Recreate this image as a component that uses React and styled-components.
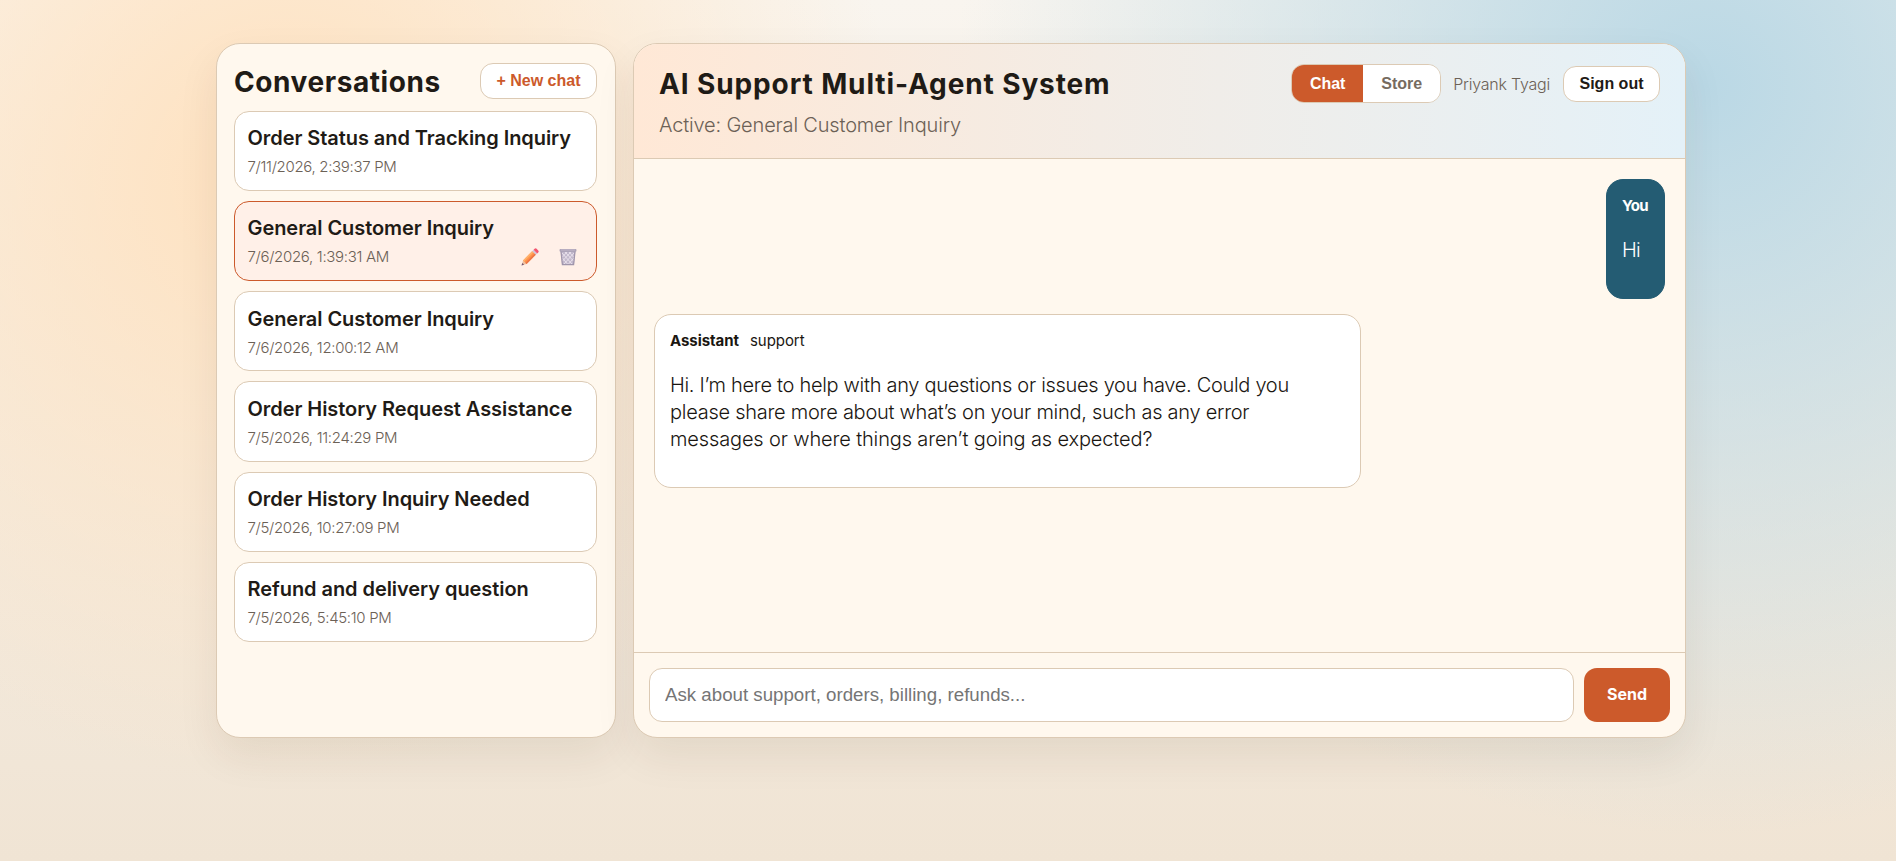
import React, { useState } from "react";
import styled, { createGlobalStyle, css } from "styled-components";

const GlobalStyle = createGlobalStyle`
  * {
    box-sizing: border-box;
  }
  body {
    margin: 0;
    min-height: 100vh;
    color: #1f1b16;
    font-family: Inter, "Noto Sans", sans-serif;
    background:
      radial-gradient(circle at 15% 20%, #ffe1be 0%, transparent 35%),
      radial-gradient(circle at 90% 10%, #bad8e5 0%, transparent 40%),
      linear-gradient(180deg, #f9f5ef 0%, #f0e4d4 100%);
    background-repeat: no-repeat;
  }
  button, input {
    font-family: "Liberation Sans", Arial, sans-serif;
  }
`;

const Shell = styled.div`
  display: grid;
  grid-template-columns: 400px 1fr;
  gap: 17px;
  height: 738px;
  padding: 43px 210px 0 216px;
`;

const panel = css`
  background: #fff8ee;
  border: 1px solid #dccab4;
  border-radius: 24px;
  box-shadow: 0 18px 40px rgba(61, 42, 18, 0.08);
`;

const Sidebar = styled.aside`
  ${panel}
  padding: 19px 18px 17px 17px;
`;

const SidebarHead = styled.div`
  display: flex;
  justify-content: space-between;
  align-items: flex-start;
  margin-bottom: 10px;
`;

const SidebarTitle = styled.h2`
  margin: 0;
  font-size: 28px;
  font-weight: 700;
  line-height: 38px;
  letter-spacing: 0.58px;
`;

const PillButton = styled.button`
  width: ${({ $width }) => $width}px;
  height: 36px;
  padding: 0;
  color: ${({ $accent }) => ($accent ? "#cc5a2b" : "#1f1b16")};
  background: #fff;
  border: 1px solid #dccab4;
  border-radius: 13px;
  font-size: 16px;
  font-weight: 700;
`;

const ConversationList = styled.div`
  display: flex;
  flex-direction: column;
  gap: 10px;
`;

const Conversation = styled.div`
  height: 80.15px;
  padding: 14.3px 13px 11px 12.5px;
  background: ${({ $active }) => ($active ? "#fff0e8" : "#fff")};
  border: 1px solid ${({ $active }) => ($active ? "#cc5a2b" : "#dccab4")};
  border-radius: 15px;
`;

const ConversationTitle = styled.div`
  font-size: 20px;
  font-weight: 600;
  line-height: 24px;
  letter-spacing: -0.06px;
  white-space: nowrap;
`;

const ConversationMeta = styled.div`
  display: flex;
  justify-content: space-between;
  margin-top: 8px;
  padding-right: 6px;
`;

const ConversationDate = styled.span`
  color: #6c6156;
  font-size: 15px;
  font-weight: 300;
  line-height: 18px;
  letter-spacing: -0.32px;
`;

const Actions = styled.span`
  display: flex;
  gap: 20px;
  opacity: 0.78;
`;

const Main = styled.main`
  ${panel}
  display: flex;
  flex-direction: column;
  overflow: hidden;
`;

const Header = styled.header`
  display: flex;
  justify-content: space-between;
  align-items: flex-start;
  height: 115px;
  padding: 20px 25px 0 25px;
  background: linear-gradient(90deg, #ffe8d6, #e4f1f8);
  border-bottom: 1px solid #dccab4;
`;

const Title = styled.h1`
  margin: 2px 0 0;
  font-size: 28px;
  font-weight: 700;
  line-height: 36px;
  letter-spacing: 0.88px;
`;

const Subtitle = styled.p`
  margin: 10px 0 0;
  color: #6c6156;
  font-size: 20px;
  font-weight: 300;
  line-height: 26px;
  letter-spacing: -0.17px;
`;

const Controls = styled.div`
  display: flex;
  align-items: center;
  gap: 12px;
`;

const Segmented = styled.div`
  display: flex;
  width: 150px;
  height: 39px;
  overflow: hidden;
  border: 1px solid #dccab4;
  border-radius: 13px;
`;

const Segment = styled.button`
  flex: ${({ $grow }) => $grow} 0 0;
  padding: 0;
  color: ${({ $active }) => ($active ? "#fff" : "#766b60")};
  background: ${({ $active }) => ($active ? "#cc5a2b" : "#fff")};
  border: 0;
  font-size: 16px;
  font-weight: 700;
`;

const UserName = styled.span`
  margin-right: 1px;
  color: #6c6156;
  font-size: 16px;
  font-weight: 300;
  letter-spacing: -0.22px;
  line-height: 20px;
`;

const Messages = styled.section`
  flex: 1;
  display: flex;
  flex-direction: column;
  align-items: flex-start;
  gap: 15px;
  padding: 20px;
`;

const Bubble = styled.article`
  padding: 16px 15px 34px;
  color: ${({ $mine }) => ($mine ? "#fff" : "#1a1611")};
  background: ${({ $mine }) => ($mine ? "#245c73" : "#fff")};
  border: 1px solid ${({ $mine }) => ($mine ? "#245c73" : "#dccab4")};
  border-radius: 17px;
  width: ${({ $mine }) => ($mine ? "59px" : "707px")};
  align-self: ${({ $mine }) => ($mine ? "flex-end" : "flex-start")};
`;

const BubbleHead = styled.div`
  display: flex;
  gap: 11px;
  margin-bottom: 21px;
  font-size: 15px;
  line-height: 20px;
  letter-spacing: ${({ $mine }) => ($mine ? "-0.6px" : "-0.05px")};
`;

const Line = styled.span`
  display: block;
  font-size: 20px;
  font-weight: 300;
  line-height: 27px;
  letter-spacing: ${({ $tracking }) => $tracking}px;
  white-space: nowrap;
`;

const Composer = styled.form`
  display: flex;
  gap: 10px;
  padding: 15px;
  border-top: 1px solid #dccab4;
`;

const Input = styled.input`
  flex: 1;
  height: 54px;
  padding: 0 15px 1px;
  background: #fff;
  border: 1px solid #dccab4;
  border-radius: 13px;
  font-size: 18.7px;

  &::placeholder {
    color: #757575;
  }
`;

const SendButton = styled.button`
  width: 86px;
  height: 54px;
  padding: 0 0 2px;
  color: #fff;
  background: #cc5a2b;
  border: 0;
  border-radius: 13px;
  font-family: Inter, sans-serif;
  font-size: 16px;
  font-weight: 700;
`;

const PencilIcon = () => (
  <svg width="18" height="18" viewBox="0 0 18 18">
    <path d="M0.8 17.3 2 12.4 5.6 16z" fill="#e8b08a" />
    <path d="M0.5 17.6 1.2 14.9 3.1 16.8z" fill="#4a2a4d" />
    <path d="M2 12.4 11.4 3 15 6.6 5.6 16z" fill="#ff7a1f" />
    <path d="M2 12.4 11.4 3 12.6 4.2 3.2 13.6z" fill="#ffa04a" />
    <path d="M4.4 14.8 13.8 5.4 15 6.6 5.6 16z" fill="#e8541c" />
    <path d="M11.2 3.2 12.6 1.8 16.2 5.4 14.8 6.8z" fill="#c5b7d6" />
    <path d="M12.6 1.8 13.6.8a1.4 1.4 0 0 1 2 0l1.6 1.6a1.4 1.4 0 0 1 0 2l-1 1z" fill="#f0294e" />
  </svg>
);

const TrashIcon = () => (
  <svg width="18" height="18" viewBox="0 0 18 18">
    <path d="M1.6 3h14.8l-1.5 14H3.1z" fill="#b0a8c4" />
    <path
      d="M3 5l10 11M6 4l8.5 9M10 4l5 5.5M3.5 10l5 6M15 5L5 16M12 4l-8.5 9M8 4L3 9.5M14.8 10L9.5 16"
      stroke="#e6e1ef"
      strokeWidth="0.9"
    />
    <path d="M2 3.5 3.4 16.6h11.2L16 3.5" fill="none" stroke="#857c9b" strokeWidth="1.2" />
    <rect x="0.6" y="1" width="16.8" height="2.7" rx="0.8" fill="#8f87a4" />
    <rect x="1.6" y="1.6" width="14.8" height="0.8" fill="#c0b9cf" />
  </svg>
);

const conversations = [
  { id: 1, title: "Order Status and Tracking Inquiry", date: "7/11/2026, 2:39:37 PM" },
  { id: 2, title: "General Customer Inquiry", date: "7/6/2026, 1:39:31 AM" },
  { id: 3, title: "General Customer Inquiry", date: "7/6/2026, 12:00:12 AM" },
  { id: 4, title: "Order History Request Assistance", date: "7/5/2026, 11:24:29 PM" },
  { id: 5, title: "Order History Inquiry Needed", date: "7/5/2026, 10:27:09 PM" },
  { id: 6, title: "Refund and delivery question", date: "7/5/2026, 5:45:10 PM" },
];

const App = () => {
  const [activeId, setActiveId] = useState(2);
  const [draft, setDraft] = useState("");
  const active = conversations.find((item) => item.id === activeId);

  return (
    <>
      <GlobalStyle />
      <Shell>
        <Sidebar>
          <SidebarHead>
            <SidebarTitle>Conversations</SidebarTitle>
            <PillButton $accent $width={117}>
              + New chat
            </PillButton>
          </SidebarHead>
          <ConversationList>
            {conversations.map((item) => (
              <Conversation
                key={item.id}
                $active={item.id === activeId}
                onClick={() => setActiveId(item.id)}
              >
                <ConversationTitle>{item.title}</ConversationTitle>
                <ConversationMeta>
                  <ConversationDate>{item.date}</ConversationDate>
                  {item.id === activeId && (
                    <Actions>
                      <PencilIcon />
                      <TrashIcon />
                    </Actions>
                  )}
                </ConversationMeta>
              </Conversation>
            ))}
          </ConversationList>
        </Sidebar>

        <Main>
          <Header>
            <div>
              <Title>AI Support Multi-Agent System</Title>
              <Subtitle>Active: {active.title}</Subtitle>
            </div>
            <Controls>
              <Segmented>
                <Segment $active $grow={71}>
                  Chat
                </Segment>
                <Segment $grow={77}>Store</Segment>
              </Segmented>
              <UserName>Priyank Tyagi</UserName>
              <PillButton $width={97}>Sign out</PillButton>
            </Controls>
          </Header>

          <Messages>
            <Bubble $mine>
              <BubbleHead $mine>
                <strong>You</strong>
              </BubbleHead>
              <Line $tracking={-0.9}>Hi</Line>
            </Bubble>
            <Bubble>
              <BubbleHead>
                <strong>Assistant</strong>
                <span>support</span>
              </BubbleHead>
              <Line $tracking={-0.3}>
                Hi. I’m here to help with any questions or issues you have. Could you
              </Line>
              <Line $tracking={-0.26}>
                please share more about what’s on your mind, such as any error
              </Line>
              <Line $tracking={-0.14}>messages or where things aren’t going as expected?</Line>
            </Bubble>
          </Messages>

          <Composer onSubmit={(e) => e.preventDefault()}>
            <Input
              value={draft}
              onChange={(e) => setDraft(e.target.value)}
              placeholder="Ask about support, orders, billing, refunds..."
            />
            <SendButton>Send</SendButton>
          </Composer>
        </Main>
      </Shell>
    </>
  );
};

export default App;
